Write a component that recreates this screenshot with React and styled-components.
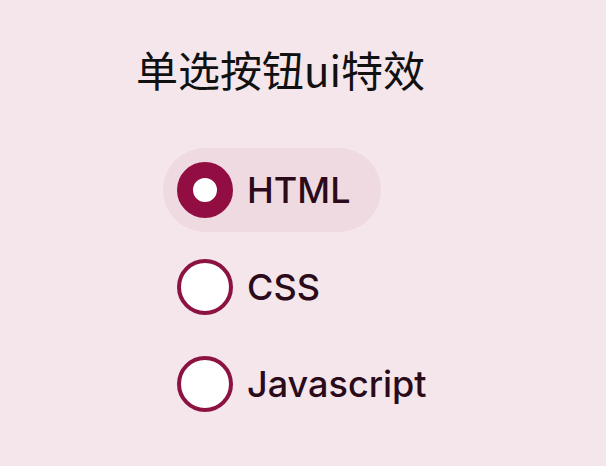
import React, { useState } from 'react';
import styled, { createGlobalStyle } from 'styled-components';

const GlobalStyle = createGlobalStyle`
  html, body {
    margin: 0;
    padding: 0;
    background: #f4e6eb;
  }
  body {
    font-family: Inter, "Noto Sans CJK SC", sans-serif;
  }
`;

const Page = styled.div`
  min-height: 466px;
  padding: 41px 0 0 136px;
  box-sizing: border-box;
`;

const Title = styled.h1`
  margin: 0 0 51px;
  font-family: "Noto Sans CJK SC", sans-serif;
  font-size: 42px;
  font-weight: 400;
  line-height: 56px;
  color: #111;
`;

const List = styled.div`
  display: flex;
  flex-direction: column;
  align-items: flex-start;
  gap: 13px;
  padding-left: 27px;
`;

const Option = styled.label`
  display: flex;
  align-items: center;
  gap: 14px;
  padding: 14px 30px 14px 14px;
  border-radius: 42px;
  background: ${(p) => (p.$checked ? '#f0dae1' : 'transparent')};
  cursor: pointer;
`;

const Input = styled.input`
  appearance: none;
  flex: none;
  margin: 0;
  padding: 0;
  width: 56px;
  height: 56px;
  border-radius: 50%;
  background: #fff;
  border: 4px solid #8c1241;
  box-sizing: border-box;

  &:checked {
    border-width: 16px;
    border-color: #920d42;
  }
`;

const Text = styled.span`
  font-size: 36px;
  font-weight: 500;
  line-height: 56px;
  color: #2b0a1a;
`;

const options = ['HTML', 'CSS', 'Javascript'];

export default function App() {
  const [value, setValue] = useState('HTML');

  return (
    <>
      <GlobalStyle />
      <Page>
        <Title>单选按钮ui特效</Title>
        <List>
          {options.map((opt) => (
            <Option key={opt} $checked={value === opt}>
              <Input
                type="radio"
                name="lang"
                checked={value === opt}
                onChange={() => setValue(opt)}
              />
              <Text>{opt}</Text>
            </Option>
          ))}
        </List>
      </Page>
    </>
  );
}
